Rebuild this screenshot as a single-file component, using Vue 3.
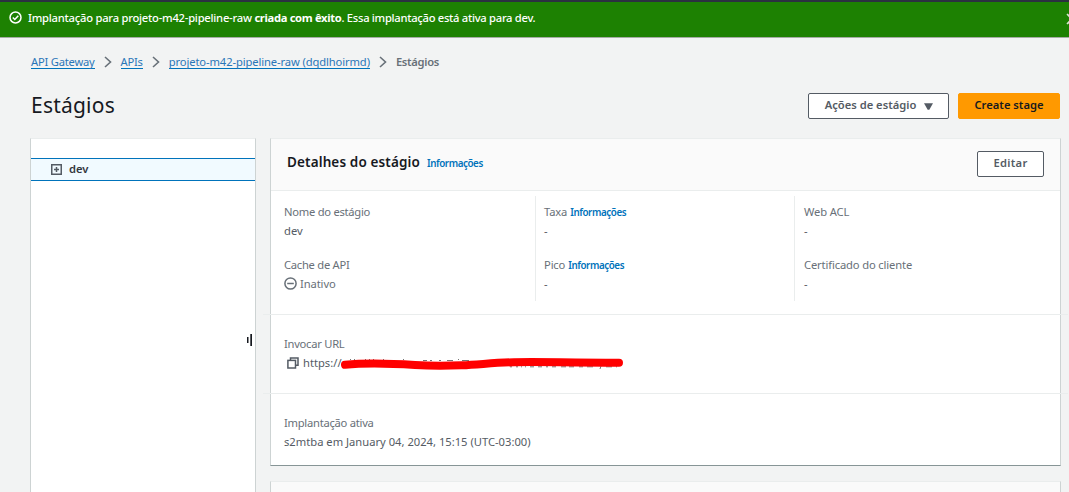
<script setup>
const fields = [
  [{ label: 'Nome do estágio', value: 'dev' }, { label: 'Cache de API', value: 'Inativo', inactive: true }],
  [{ label: 'Taxa', info: true, value: '-' }, { label: 'Pico', info: true, value: '-' }],
  [{ label: 'Web ACL', value: '-' }, { label: 'Certificado do cliente', value: '-' }],
]
</script>

<template>
  <div class="page">
    <div class="flash">
      <svg class="ok" width="13" height="13" viewBox="0 0 13 13" fill="none" stroke="#fff" stroke-width="1.5">
        <circle cx="6.5" cy="6.5" r="5.5" /><path d="M3.8 6.5 5.8 8.5 9.3 4.8" />
      </svg>
      <span class="msg"><span class="m1">Implantação para projeto-m42-pipeline-raw </span><b>criada com êxito</b><span class="m2">. Essa implantação está ativa para dev.</span></span>
      <svg class="close" width="12" height="12" viewBox="0 0 12 12" stroke="#d5e8cf" stroke-width="1.6"><path d="M1 1 11 11M11 1 1 11" /></svg>
    </div>

    <nav class="crumbs">
      <a class="c1">API Gateway</a>
      <svg class="chev" width="8" height="12" viewBox="0 0 8 12"><path d="M1 1 6.5 6 1 11" /></svg>
      <a class="c2">APIs</a>
      <svg class="chev" width="8" height="12" viewBox="0 0 8 12"><path d="M1 1 6.5 6 1 11" /></svg>
      <a class="c3">projeto-m42-pipeline-raw (dqdlhoirmd)</a>
      <svg class="chev" width="8" height="12" viewBox="0 0 8 12"><path d="M1 1 6.5 6 1 11" /></svg>
      <b>Estágios</b>
    </nav>

    <header class="head">
      <h1>Estágios</h1>
      <button class="btn actions"><span>Ações de estágio</span>
        <svg width="9" height="7" viewBox="0 0 9 7"><path d="M0 .3H9L5.3 6.8H3.7Z" fill="#545b64" /></svg>
      </button>
      <button class="btn primary"><span>Create stage</span></button>
    </header>

    <main class="body">
      <aside class="tree">
        <div class="node">
          <svg width="11" height="11" viewBox="0 0 11 11" fill="none" stroke="#545b64"><rect x=".75" y=".75" width="9.5" height="9.5" stroke-width="1.5" /><path d="M3 5.5H8M5.5 3V8" stroke-width="1.5" /></svg>
          <b>dev</b>
        </div>
        <svg class="grip" width="6" height="12" viewBox="0 0 6 12" fill="#16191f"><rect x="0" y="3" width="1.5" height="6" /><rect x="3.3" y="0" width="1.7" height="12" /></svg>
      </aside>

      <div class="right">
        <section class="card">
          <div class="card-head">
            <h2>Detalhes do estágio</h2><a class="info hinfo">Informações</a>
            <button class="btn edit"><span>Editar</span></button>
          </div>
          <div class="cols">
            <div v-for="(col, i) in fields" :key="i" class="col">
              <div v-for="f in col" :key="f.label" class="field">
                <div class="label"><span>{{ f.label }}</span><a v-if="f.info" class="info">Informações</a></div>
                <div class="value" :class="{ off: f.inactive }">
                  <svg v-if="f.inactive" width="13" height="13" viewBox="0 0 13 13" fill="none" stroke="#687078" stroke-width="1.5"><circle cx="6.5" cy="6.5" r="5.6" /><path d="M3.2 6.5H9.8" /></svg>
                  <span>{{ f.value }}</span>
                </div>
              </div>
            </div>
          </div>
          <div class="row">
            <div class="label">Invocar URL</div>
            <div class="value url">
              <svg class="copy" width="12" height="12" viewBox="0 0 12 12" fill="none" stroke="#545b64" stroke-width="1.5"><path d="M3.5 3V.9H11V8.3H9" /><rect x=".9" y="3.4" width="7.6" height="7.6" /></svg>
              <span>https://</span>
              <svg class="scribble" width="288" height="18" viewBox="0 0 288 18" fill="none">
                <path d="M10 5.5h1M14 5.5h1M25 5.5h1M29 5.5h1M33 5.5h1M43 5.5h1M63 5.5h1M83 6.5h4M90 6.5h2M99 6.5h2M107 6.5h6M118 5.5h1M122 6.5h7" stroke="#777" stroke-width="1.2" />
                <path d="M170 12.8h2M176 12.8h2M181 12.8h1M185 12.8h1M190 12.8h4M198 12.8h4M206 12.8h2M212 12.8h4M221 12.8h5M229 12.8h5M239 12.8h4M247 12.8h6M260 15 261 12M266 12.8h6M276 12.8h1" stroke="#777" stroke-width="1" />
                <path d="M5 10.8C28 8.4 54 9.6 75 11S105 12 122 11.3 153 8.8 174 8.2 210 8.3 279 8.8" stroke="#f00" stroke-width="8" stroke-linecap="round" />
              </svg>
            </div>
          </div>
          <div class="row last">
            <div class="label">Implantação ativa</div>
            <div class="value date">s2mtba em January 04, 2024, 15:15 (UTC-03:00)</div>
          </div>
        </section>
        <section class="card next"></section>
      </div>
    </main>
  </div>
</template>

<style>
body { margin: 0; overflow: hidden; }
</style>
<style scoped>
* { box-sizing: border-box; }
.page { width: 1069px; height: 492px; overflow: hidden; background: #f2f3f3; font: 11.2px/18px "Noto Sans", "Open Sans", sans-serif; color: #545b64; white-space: nowrap; }
.flash { height: 38px; border-top: 2px solid #2b3040; border-bottom: 1px solid #a5aca5; background: #1d8102; background-clip: padding-box; color: #fff; display: flex; align-items: center; padding: 0 0 4px 9px; position: relative; }
.ok { margin-right: 6px; }
.msg { font-weight: 500; white-space: pre; letter-spacing: -.23px; }
.msg b { letter-spacing: -.32px; }
.m2 { letter-spacing: -.28px; }
.close { position: absolute; left: 1066px; top: 11px; }
.crumbs { display: flex; align-items: center; height: 14px; margin: 17px 0 0 31px; }
.crumbs a { color: #2a76b8; border-bottom: 1px solid #0073bb; height: 14px; line-height: 13px; letter-spacing: -.11px; }
.crumbs .c1, .crumbs .c2 { letter-spacing: -.22px; }
.crumbs b { color: #687078; font-weight: 600; height: 14px; line-height: 13px; letter-spacing: -.28px; }
.chev { margin: 0 9px; fill: none; stroke: #687078; stroke-width: 1.6; }
.head { display: flex; height: 26px; margin: 24px 9px 0 31px; align-items: center; }
h1 { margin: 0 auto 0 0; font-size: 21px; font-weight: 400; line-height: 26px; letter-spacing: .22px; color: #16191f; padding-bottom: 3px; }
.btn { font: 600 11.2px/14px "Noto Sans", sans-serif; height: 26px; border: 1px solid #545b64; border-radius: 2px; background: #fff; color: #545b64; padding: 0 0 2px; display: flex; align-items: center; justify-content: center; }
.actions { width: 141px; gap: 8px; margin-right: 9px; padding-left: 1px; }
.actions svg { margin-top: 2px; }
.primary { width: 102px; background: #f90; border-color: #f90; color: #16191f; }
.body { display: flex; margin-top: 19px; gap: 14px; padding-left: 30px; }
.tree { width: 226px; height: 360px; background: #fff; border: 1px solid #cdd3d3; border-top-color: #eaeded; padding-top: 19px; position: relative; }
.node { height: 23px; border: solid #0073bb; border-width: 1px 0; background: #f1faff; display: flex; align-items: center; padding-left: 20px; gap: 7px; color: #32363e; }
.node b { font-weight: 600; padding-bottom: 2px; }
.grip { position: absolute; left: 216px; top: 195px; }
.right { width: 791px; }
.card { height: 328px; background: #fff; border: 1px solid #cdd3d3; border-top-color: #eaeded; border-bottom-color: #879596; }
.card-head { height: 52px; background: #fafafa; border-bottom: 1px solid #eaeded; display: flex; align-items: center; padding: 0 16px 2px; }
h2 { margin: 0; font-size: 13.5px; line-height: 18px; font-weight: 600; letter-spacing: .13px; color: #16191f; padding-bottom: 4px; }
.info { color: #0073bb; font-size: 9.8px; font-weight: 600; letter-spacing: -.42px; }
.hinfo { margin-left: 7px; }
.edit { width: 67px; margin-left: auto; letter-spacing: .3px; }
.cols { display: flex; height: 105px; margin-top: 5px; }
.col { width: 264px; padding: 6px 0 0 13px; }
.col + .col { width: 259px; padding-left: 8px; border-left: 1px solid #eaeded; }
.col + .col + .col { padding-left: 9px; }
.field { height: 53px; }
.label { color: #687078; line-height: 19px; height: 19px; letter-spacing: -.26px; }
.col + .col .label { letter-spacing: -.14px; }
.col .label .info { margin-left: 3px; letter-spacing: -.42px; }
.value { line-height: 19px; height: 19px; color: #545b64; display: flex; align-items: center; }
.off { color: #687078; gap: 3px; letter-spacing: -.1px; }
.row { height: 79px; border-top: 1px solid #eaeded; margin: 0 -8px; padding: 19px 0 0 21px; }
.cols + .row { margin-top: 13px; }
.copy { margin: 0 4px 0 3px; }
.url { position: relative; }
.scribble { position: absolute; left: 56px; top: 1px; }
.next { margin-top: 15px; height: 40px; background: #fafafa; }
</style>
